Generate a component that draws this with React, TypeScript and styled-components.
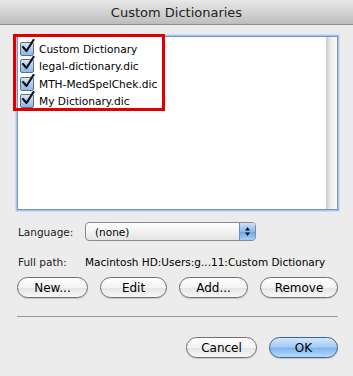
import React from "react";
import styled, { createGlobalStyle } from "styled-components";

const Global = createGlobalStyle`
  html, body { margin: 0; padding: 0; background: #ececec; }
  body { font-family: "DejaVu Sans", "Liberation Sans", sans-serif; font-size: 10.5px; color: #000; }
`;

const Window = styled.div`
  width: 353px;
  height: 376px;
  background: #ececec;
  display: flex;
  flex-direction: column;
  overflow: hidden;
`;

const TitleBar = styled.div`
  height: 24px;
  flex: none;
  display: flex;
  align-items: center;
  justify-content: center;
  background: linear-gradient(#e8e8e8, #cfcfcf 60%, #bdbdbd);
  border-bottom: 1px solid #8f8f8f;
  font-size: 13px;
  color: #222;
`;

const Body = styled.div`
  padding: 9px 13px 0 15px;
  display: flex;
  flex-direction: column;
`;

const ListBox = styled.div`
  position: relative;
  height: 172px;
  background: #fff;
  border: 1px solid #7396d1;
  box-shadow: 0 0 0 1px #a9c2ea, 0 0 0 2px #cfdcf2;
  margin: 2px 2px 0 2px;
  display: flex;
`;

const ListItems = styled.div`
  flex: 1;
  padding: 3px 0 0 2px;
  display: flex;
  flex-direction: column;
`;

const Scroller = styled.div`
  width: 11px;
  background: linear-gradient(to right, #c8c8c8, #ececec 40%, #fafafa);
`;

const Highlight = styled.div`
  position: absolute;
  left: -5px;
  top: -3px;
  width: 146px;
  height: 71px;
  border: 3px solid #e00000;
`;

const Row = styled.div`
  height: 17.5px;
  display: flex;
  align-items: center;
  gap: 5px;
  font-size: 10.6px;
`;

const Box = styled.span`
  width: 12px;
  height: 12px;
  flex: none;
  border: 1px solid #5b6e8c;
  border-radius: 2px;
  background: linear-gradient(#d6e6fa, #8cb6ea);
  position: relative;
  display: inline-block;
`;

const Check = () => (
  <svg width="14" height="15" viewBox="0 0 14 15" style={{ position: "absolute", left: 0, top: -4 }}>
    <path d="M2 8 L5.5 12 L12.5 1" fill="none" stroke="#111" strokeWidth="2.2" strokeLinecap="round" strokeLinejoin="round" />
  </svg>
);

const FieldRow = styled.div<{ $mt: number }>`
  display: flex;
  align-items: center;
  margin-top: ${(p) => p.$mt}px;
  padding-left: 3px;
`;

const Label = styled.span`
  width: 67px;
  flex: none;
  color: #222;
`;

const Popup = styled.div`
  width: 169px;
  height: 17px;
  border: 1px solid #8a8a8a;
  border-radius: 4px;
  background: linear-gradient(#ffffff, #f2f2f2 50%, #e4e4e4);
  display: flex;
  align-items: stretch;
  overflow: hidden;
`;

const PopupText = styled.span`
  flex: 1;
  padding-left: 9px;
  display: flex;
  align-items: center;
`;

const PopupArrows = styled.span`
  width: 15px;
  background: linear-gradient(#cde0f7, #8cb9ee 50%, #6aa4ea 51%, #a9cdf6);
  border-left: 1px solid #6f90c2;
  display: flex;
  align-items: center;
  justify-content: center;
`;

const ButtonRow = styled.div<{ $end?: boolean; $mt: number }>`
  display: flex;
  justify-content: ${(p) => (p.$end ? "flex-end" : "space-between")};
  gap: 12px;
  margin-top: ${(p) => p.$mt}px;
  padding: 0 2px;
`;

const Button = styled.button<{ $w: number; $primary?: boolean }>`
  width: ${(p) => p.$w}px;
  height: 21px;
  border-radius: 11px;
  border: 1px solid ${(p) => (p.$primary ? "#3f5f9a" : "#707070")};
  background: ${(p) =>
    p.$primary
      ? "linear-gradient(#d3e7fb, #a5cdf4 45%, #7fb6ef 55%, #b7dcfb)"
      : "linear-gradient(#ffffff, #f3f3f3 50%, #e6e6e6 55%, #f7f7f7)"};
  font-family: inherit;
  font-size: 12px;
  color: #000;
  padding: 0;
  box-shadow: 0 1px 1px rgba(0, 0, 0, 0.15);
`;

const Separator = styled.div`
  height: 1px;
  background: #9a9a9a;
  margin: 18px 2px 0 2px;
`;

const items = ["Custom Dictionary", "legal-dictionary.dic", "MTH-MedSpelChek.dic", "My Dictionary.dic"];

export default function App() {
  return (
    <Window>
      <Global />
      <TitleBar>Custom Dictionaries</TitleBar>
      <Body>
        <ListBox>
          <ListItems>
            {items.map((t) => (
              <Row key={t}>
                <Box>
                  <Check />
                </Box>
                {t}
              </Row>
            ))}
          </ListItems>
          <Scroller />
          <Highlight />
        </ListBox>
        <FieldRow $mt={12}>
          <Label>Language:</Label>
          <Popup>
            <PopupText>(none)</PopupText>
            <PopupArrows>
              <svg width="7" height="11" viewBox="0 0 7 11">
                <path d="M3.5 1 L6 4.5 H1 Z M3.5 10 L6 6.5 H1 Z" fill="#111" />
              </svg>
            </PopupArrows>
          </Popup>
        </FieldRow>
        <FieldRow $mt={15}>
          <Label>Full path:</Label>
          <span>Macintosh HD:Users:g...11:Custom Dictionary</span>
        </FieldRow>
        <ButtonRow $mt={9}>
          <Button $w={71}>New...</Button>
          <Button $w={67}>Edit</Button>
          <Button $w={69}>Add...</Button>
          <Button $w={78}>Remove</Button>
        </ButtonRow>
        <Separator />
        <ButtonRow $end $mt={20}>
          <Button $w={71}>Cancel</Button>
          <Button $w={69} $primary>OK</Button>
        </ButtonRow>
      </Body>
    </Window>
  );
}
